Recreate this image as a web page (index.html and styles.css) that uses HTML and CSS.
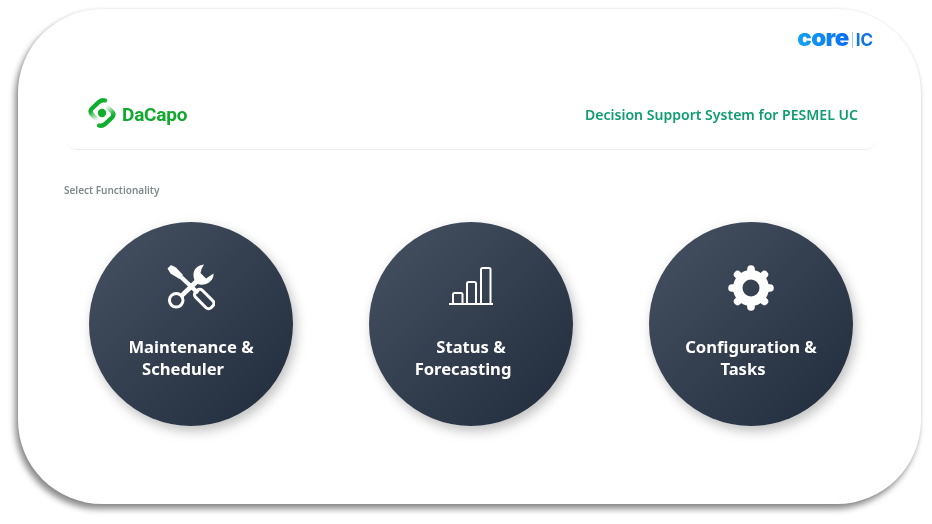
FILE: index.html
```html
<!DOCTYPE html>
<html lang="en">
<head>
    <meta charset="UTF-8">
    <title>Decision Support System</title>
    <link rel="stylesheet" href="styles.css">
</head>
<body>
    <div class="card">
        <div class="top">
            <div class="coreic">
                <span class="core">core</span>
                <span class="sep"></span>
                <span class="ic">IC</span>
            </div>
        </div>
        <div class="header">
            <div class="logo">
                <svg class="logo-mark" width="32" height="32" viewBox="0 0 32 32" fill="none" stroke-width="4.4" stroke-linecap="round">
                    <defs>
                        <linearGradient id="fadeA" gradientUnits="userSpaceOnUse" x1="4" y1="13" x2="10" y2="21">
                            <stop offset="0" stop-color="#0fae2c"/>
                            <stop offset="1" stop-color="#0fae2c" stop-opacity="0.1"/>
                        </linearGradient>
                        <linearGradient id="fadeB" gradientUnits="userSpaceOnUse" x1="26" y1="17" x2="20" y2="9">
                            <stop offset="0" stop-color="#0fae2c"/>
                            <stop offset="1" stop-color="#0fae2c" stop-opacity="0.1"/>
                        </linearGradient>
                    </defs>
                    <path d="M18 2.5 Q15 1.5 12 4 L4.5 11 Q2.5 13.5 5 16.5 L9 20.5" stroke="url(#fadeA)"/>
                    <path d="M12 27.5 Q15 28.5 18 26 L25.5 19 Q27.5 16.5 25 13.5 L21 9.5" stroke="url(#fadeB)"/>
                    <circle cx="15" cy="15" r="4.2" fill="#0fae2c" stroke="none"/>
                </svg>
                <span class="logo-text">DaCapo</span>
            </div>
            <div class="title">Decision Support System for PESMEL UC</div>
        </div>
        <div class="label">Select Functionality</div>
        <div class="circles">
            <div class="circle">
                <svg class="icon" width="48" height="48" viewBox="0 0 48 48" fill="none" stroke="#fff">
                    <path d="M0.5 4.5 L4 1 L9 3.5 L16 11 L12.5 15 L3.5 9.5 Z" fill="#fff" stroke="none"/>
                    <path d="M14 13 L31 29" stroke-width="4.2"/>
                    <rect x="-4.8" y="-11" width="9.6" height="22" rx="3.5" transform="translate(37.2 35) rotate(-45)" stroke-width="3"/>
                    <circle cx="9.2" cy="36.3" r="6.8" stroke-width="3"/>
                    <path d="M37 0.5 C30 1 26 6 26.5 12 C26.7 14 27 15 27.5 16 L12 31 L15 34.5 L30.5 20 C33 21 36 21 39 20 C44 18 47 14 46.5 9.5 L39 14.5 L33.5 9 L34.5 5 Z" fill="#fff" stroke="none"/>
                </svg>
                <div class="name">Maintenance &amp;<br><span class="second">Scheduler</span></div>
            </div>
            <div class="circle">
                <svg class="icon" width="48" height="48" viewBox="0 0 48 48" fill="none" stroke="#fff" stroke-width="2">
                    <path d="M2 40 H46"/>
                    <path d="M6 40 V30.5 Q6 29 7.5 29 H14 Q15.5 29 15.5 30.5 V40"/>
                    <path d="M20 40 V19.5 Q20 18 21.5 18 H27.5 Q29 18 29 19.5 V40"/>
                    <path d="M34 40 V5.5 Q34 4 35.5 4 H42 Q43.5 4 43.5 5.5 V40"/>
                </svg>
                <div class="name">Status &amp;<br><span class="second">Forecasting</span></div>
            </div>
            <div class="circle">
                <svg class="icon" width="48" height="48" viewBox="0 0 48 48" fill="none" stroke="#fff" stroke-linecap="round">
                    <circle cx="24" cy="24" r="13.2" stroke-width="9.4"/>
                    <g stroke-width="7.6">
                        <path d="M24 5 V9"/>
                        <path d="M24 39 V43"/>
                        <path d="M5 24 H9"/>
                        <path d="M39 24 H43"/>
                        <path d="M10.6 10.6 L13.4 13.4"/>
                        <path d="M34.6 34.6 L37.4 37.4"/>
                        <path d="M37.4 10.6 L34.6 13.4"/>
                        <path d="M13.4 34.6 L10.6 37.4"/>
                    </g>
                </svg>
                <div class="name">Configuration &amp;<br><span class="second">Tasks</span></div>
            </div>
        </div>
    </div>
</body>
</html>
```

FILE: styles.css
```css
html, body{
    height: 100%;
}

body{
    box-sizing: border-box;
    margin: 0;
    padding: 9px 0 0 18px;
    background-color: #fff;
    font-family: "Noto Sans", sans-serif;
}

.card{
    box-sizing: border-box;
    width: 903px;
    height: 495px;
    background-color: #fff;
    border-radius: 84px;
    box-shadow: -3px 5px 6px rgba(0, 0, 0, 0.45), 0 0 3px rgba(0, 0, 0, 0.1);
}

.top{
    display: flex;
    justify-content: flex-end;
    padding: 21px 48px 0 0;
}

.coreic{
    display: flex;
    align-items: center;
    height: 20px;
    gap: 3px;
    filter: blur(0.5px);
}

.core{
    font-family: "Inter", sans-serif;
    font-size: 24px;
    font-weight: 900;
    letter-spacing: -0.6px;
    line-height: 20px;
    padding-bottom: 4px;
    background: linear-gradient(90deg, #13a3f2, #0a6cf5);
    -webkit-background-clip: text;
    background-clip: text;
    color: transparent;
}

.sep{
    width: 1px;
    height: 16px;
    background-color: #a9c9f3;
}

.ic{
    font-family: "Inter", sans-serif;
    font-size: 17px;
    font-weight: 700;
    line-height: 20px;
    color: #1274e0;
}

.header{
    display: flex;
    justify-content: space-between;
    align-items: center;
    height: 48px;
    margin: 40px 45px 0 48px;
    padding: 0 18px 11px 21px;
    border-bottom: 1px solid #eeeeee;
    border-radius: 0 0 10px 10px;
}

.logo{
    display: flex;
    align-items: center;
    gap: 3px;
    filter: blur(0.3px);
}

.logo-text{
    font-family: "Roboto", sans-serif;
    font-size: 19px;
    font-weight: 700;
    letter-spacing: -0.2px;
    color: #12a92f;
}

.title{
    font-size: 14.05px;
    font-weight: 600;
    color: #0f9d6f;
    filter: blur(0.3px);
}

.label{
    margin: 33px 0 0 46px;
    font-size: 10px;
    font-weight: 600;
    line-height: 14px;
    color: #7f8a8c;
    filter: blur(0.3px);
}

.circles{
    display: flex;
    gap: 76px;
    margin: 25px 0 0 71px;
}

.circle{
    box-sizing: border-box;
    width: 204px;
    height: 204px;
    padding-top: 42px;
    border-radius: 50%;
    background: linear-gradient(135deg, #465162, #202b3b);
    box-shadow: 3px 5px 12px rgba(0, 0, 0, 0.25);
    display: flex;
    flex-direction: column;
    align-items: center;
}

.icon{
    display: block;
    filter: blur(0.3px);
}

.name{
    margin-top: 24px;
    font-size: 16.6px;
    font-weight: 700;
    line-height: 22px;
    color: #fff;
    text-align: center;
    filter: blur(0.3px);
}

.second{
    padding-right: 16px;
}
```
